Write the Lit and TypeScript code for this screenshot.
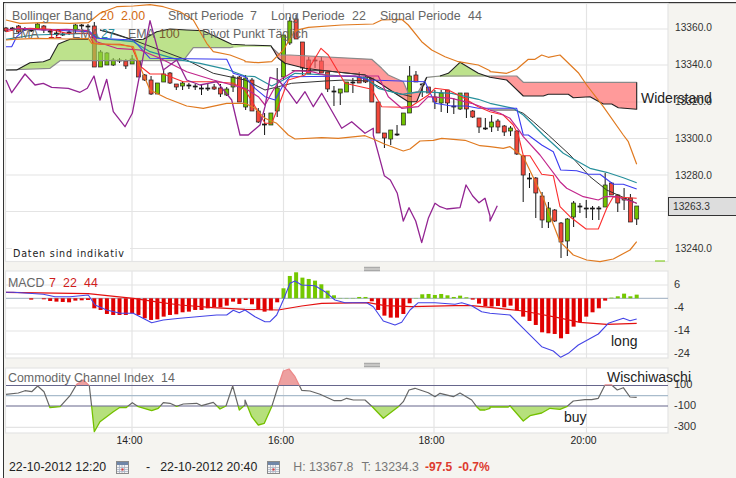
import { LitElement, html, svg, css } from "lit";
import { customElement } from "lit/decorators.js";

const X = (i: number) => 6 + 6.307 * i;

// zoomed-crop coordinates (3x) converted to chart coordinates
const Z = (ox: number, oy: number, s: string) =>
  s.trim().split(/\s+/).map((p) => {
    const [a, b] = p.split(",").map(Number);
    return `${(ox + a / 3).toFixed(1)},${(oy + b / 3).toFixed(1)}`;
  }).join(" ");

type C = [number, number, number, number, string];
const candles: C[] = [
  [28,31,27,32,"r"],[28,29,27,31,"d"],[26,32,25,33,"r"],[29,30,27,31,"d"],[30,31,28,32,"d"],[24,29,23,30,"g"],[26,30,25,33,"r"],[31,32,29,34,"d"],
  [33,34,31,36,"d"],[34,35,32,36,"d"],[32,33,30,35,"d"],[25,30,24,33,"g"],[25,26,24,29,"d"],[26,27,24,30,"d"],
  [26,67,22,67,"r"],[52,67,50,67,"g"],[53,65,52,65,"g"],[60,65,58,66,"g"],[60,61,58,63,"d"],[61,66,59,69,"r"],[59,64,55,64,"g"],[61,77,61,77,"r"],
  [75,80,74,81,"r"],[80,94,76,95,"r"],[83,94,83,94,"g"],[74,82,70,82,"g"],[73,83,72,84,"r"],[84,87,84,90,"r"],[83,86,81,90,"g"],[85,86,83,89,"d"],
  [86,87,84,90,"d"],[88,89,85,95,"d"],[88,89,83,91,"d"],[87,89,84,90,"r"],[88,94,84,97,"r"],[89,95,87,96,"g"],[77,87,75,92,"g"],[77,102,76,102,"r"],
  [78,107,75,110,"g"],[80,111,78,111,"r"],[111,122,108,123,"r"],[124,125,113,135,"d"],[113,125,113,125,"g"],[88,111,68,117,"g"],[35,77,35,80,"g"],[21,43,17,45,"g"],
  [19,39,15,39,"r"],[42,68,42,75,"r"],[60,74,57,74,"r"],[60,61,57,68,"d"],[61,73,57,73,"r"],[72,89,72,92,"r"],[91,92,86,106,"d"],[89,93,89,105,"g"],
  [82,92,82,92,"g"],[82,83,78,93,"d"],[77,83,72,83,"r"],[77,82,75,83,"r"],[78,102,78,102,"r"],[102,133,102,133,"r"],[133,138,133,148,"r"],[130,139,130,145,"g"],
  [134,135,125,136,"d"],[113,125,113,125,"g"],[76,113,66,113,"g"],[75,82,71,82,"r"],[84,85,83,97,"d"],[87,93,87,93,"r"],[97,102,90,109,"r"],[93,103,90,112,"g"],
  [90,103,90,113,"r"],[106,107,98,114,"d"],[93,109,93,110,"g"],[93,109,93,118,"r"],[111,117,110,118,"r"],[118,127,118,133,"r"],[128,129,118,130,"d"],[122,127,115,132,"g"],
  [121,127,119,131,"r"],[126,132,125,136,"r"],[128,131,126,136,"g"],[131,154,130,155,"r"],[156,175,155,202,"r"],[178,179,173,188,"d"],[178,193,177,218,"r"],[196,220,192,228,"r"],
  [208,222,202,228,"g"],[210,221,209,222,"r"],[223,242,222,258,"r"],[219,241,218,256,"g"],[203,217,201,227,"g"],[206,207,203,213,"d"],[208,209,200,218,"d"],[208,209,206,220,"d"],
  [208,209,206,220,"d"],[185,207,173,207,"g"],[183,195,182,195,"r"],[195,203,194,212,"r"],[198,200,188,210,"g"],[198,222,194,222,"r"],[206,219,206,225,"g"],
];

// histogram per candle index, in 3x crop pixels from the zero line (+ up, - down)
const hist: number[] = [
  0,0,0,0,-4,0,-3,-8,-10,-11,-12,-7,-6,-5,-30,-35,-47,-50,-50,-50,-45,-50,-60,-65,-63,-55,-50,-48,-42,-40,-35,-35,-30,-27,-27,-22,-10,-17,
  -5,-18,-33,-40,-36,-12,30,67,78,62,58,53,42,23,9,1,1,1,4,4,-9,-35,-52,-58,-58,-47,-15,1,12,13,10,13,9,4,8,3,-4,-16,-24,
  -25,-23,-27,-22,-36,-55,-68,-80,-102,-105,-107,-120,-107,-85,-72,-55,-42,-30,-7,2,6,14,6,11,
];

const bbUp = Z(0,0,"18,60 60,70 130,68 210,70 265,68 300,40 350,20 400,18 450,14 490,20 540,35 580,60 620,130 640,155 690,165 735,182") + " " +
  Z(245,0,"0,185 40,188 80,185 115,150 150,92 190,82 290,75 385,72 410,60 470,58 490,75 530,125 560,150 600,170 640,185 700,195 735,212") + " " +
  Z(490,0,"0,215 50,220 80,208 115,178 135,178 155,165 175,172 210,165 265,218 290,255 340,320 400,405") + " " + Z(490,135,"415,20 440,88");
const bbLow = Z(0,0,"18,120 40,118 110,115 200,117 265,115 275,130 360,135 400,140 420,200 450,270 500,295 560,318 610,325 680,310 735,310") + " " +
  Z(245,0,"30,325 60,355 95,370 130,405") + " " +
  Z(245,135,"150,12 230,8 280,10 360,2 385,12 420,28 475,48 495,42 525,18 565,16 590,10 660,16 705,32 735,35") + " " +
  Z(490,135,"40,40 60,35 100,65 160,190 210,320 250,360 290,375 330,380 370,372 420,345 440,320");
const purple = Z(0,0,"18,240 35,278 75,222 105,255 130,250 155,262 205,265 240,277 262,265 282,228 300,300 320,238 340,335 375,380 397,340 450,62 490,210 530,180 560,240 600,255 650,245 695,300 720,405") + " " +
  Z(245,0,"10,405 45,375 60,320 75,232 100,240 130,275 155,310 180,275 205,320 230,280 290,385 320,365 360,400 385,385") + " " +
  Z(245,135,"385,0 400,55 418,122 436,135 457,175 475,258 492,218 512,258 530,323 550,250 570,205 585,215 605,222 645,218 663,150 683,183 702,203 720,190 735,243") + " " + Z(490,135,"0,258 22,212");
const magenta = Z(0,0,"18,90 60,85 130,90 200,88 265,92 290,125 350,145 420,150 480,175 560,215 640,240 735,265") + " " +
  Z(245,0,"40,290 60,315 85,270 105,240 150,212 200,215 250,228 400,228 430,290 470,325 520,320 550,290 620,295 680,310 735,330") + " " +
  Z(490,0,"30,340 60,355 90,395") + " " + Z(490,135,"100,5 150,60 210,140 230,160 280,185 325,195 345,185 380,185 440,205");
const red = Z(0,0,"18,95 50,88 90,85 150,88 200,100 265,100 280,130 300,133 360,133 395,140 420,198 450,222 490,222 550,245 640,245 700,250 735,270") + " " +
  Z(245,0,"40,335 60,370 80,370 100,320 130,240 180,225 228,145 250,165 300,250 380,268 410,320 470,322 500,318 550,285 570,265 610,270 650,290 700,320 735,335") + " " +
  Z(490,0,"40,345 70,375 85,405") + " " + Z(490,135,"100,62 120,62 155,118 190,122 210,215 240,245 288,282 325,282 350,220 370,185 440,190");
const blue = Z(0,0,"18,140 35,140 50,110 75,88 150,90 270,95 290,115 400,120 450,175 680,178 700,220 735,230") + " " +
  Z(245,0,"30,265 60,290 90,300 115,255 135,230 330,228 370,240 540,245 570,310 620,318 665,318 700,325") + " " +
  Z(490,0,"80,325 100,405") + " " + Z(490,135,"115,0 155,30 190,50 212,105 260,107 295,118 330,118 370,148 400,148 440,162");
const teal = Z(0,0,"18,118 100,105 265,100 300,115 400,125 450,155 530,178 600,190 680,208 735,228") + " " +
  Z(245,0,"30,230 80,258 115,240 150,220 250,225 360,232 400,265 470,283 530,275 620,280 700,298 735,310") + " " +
  Z(490,0,"70,325 100,345 160,405") + " " + Z(490,135,"220,55 300,100 350,112 400,128 440,143");
const dark = Z(0,0,"300,90 400,120 480,150 560,180 640,220 735,240") + " " +
  Z(245,0,"60,270 100,260 140,250 240,243 300,240 370,243 420,270 500,290") + " " ;
const dark2 = Z(490,0,"0,330 75,330 100,340 130,365 175,405") + " " + Z(490,135,"240,60 300,125 350,165 440,205");
const darkBox = Z(245,0,"140,212 240,212 360,225 380,240");

const cloudGreen = [
  Z(0,0,"175,132 210,118 280,115 400,120 430,118 470,95 510,87 560,90 610,92 695,133") + " " + Z(245,0,"0,135 78,137 78,140 0,140") + " " + Z(0,0,"700,143 580,143 550,182 180,182 150,205 60,208 18,210 50,210 90,188 130,185 150,178"),
  Z(245,0,"545,232 585,228 610,220 645,187 700,220 735,232") + " " + Z(490,0,"0,228 0,228"),
];
const cloudRed = [
  Z(245,0,"78,140 105,165 135,165 380,178 430,225 475,245 490,280 520,275 545,232 515,305 490,305 450,280 390,240 360,225 240,212 180,205 120,190 100,175"),
  Z(490,0,"0,228 80,228 100,247 440,247 440,328 385,323 365,312 340,312 300,290 250,293 235,283 175,283 160,288 100,288 50,240 0,232"),
];
const cloudTop = Z(0,0,"18,210 50,210 90,188 130,185 150,178 175,132 210,118 265,118");
const cloudTop2 = Z(0,0,"300,90 340,100 400,120 430,118 470,95 510,87 560,90 610,92 695,133") + " " + Z(245,0,"0,135 78,137 100,175 120,190 180,205 240,212 360,225 390,240 450,280 490,305 515,305 545,232");
const cloudTop3 = Z(245,0,"585,228 610,220 645,187 700,220 735,232") + " " + Z(490,0,"0,232 50,240 100,288 160,288 175,283 235,283 250,293 300,290 340,312 365,312 385,323 440,328 440,247");
const cloudGrey = Z(0,0,"18,210 150,205 180,182 550,182 580,143 690,143 700,140") + " ";
const cloudGrey2 = Z(245,0,"78,140 105,165 135,165 380,178 410,205 430,225 475,245 490,280 520,275 545,232 585,228 735,228") + " " + Z(490,0,"80,228 100,247 440,247");

const macdSig = Z(0,265,"18,82 265,86 400,100 480,112 540,120 640,128 735,133") + " " + Z(245,265,"100,135 170,123 230,115 370,113 420,122 500,125 630,122 680,122 735,127") + " " + Z(490,265,"100,138 200,157 270,172 350,178 440,175");
const macdLine = Z(0,265,"18,82 40,82 130,88 165,95 210,95 265,90 285,120 320,135 360,145 400,145 455,173 490,165 540,160 650,150 680,150 700,136 718,143 735,135") + " " +
  Z(245,265,"30,155 60,170 75,170 95,150 115,105 135,55 150,48 170,60 210,62 240,80 270,105 300,113 365,113 385,125 415,168 450,180 470,172 495,135 520,113 570,113 630,118 650,113 680,122 710,140 735,145") + " " +
  Z(490,265,"60,150 100,190 155,245 190,258 212,277 235,265 265,240 325,207 355,175 400,160 420,167 440,162");

const cciPts = Z(0,365,"18,88 55,84 75,77 95,80 113,63 132,80 150,128 180,125 210,92 230,58 250,45 268,62 275,125 283,200 300,170 340,140 358,128 378,128 397,113 415,125 455,137 475,130 490,113 510,115 530,124 550,117 590,115 605,122 640,112 660,132 678,123 698,63 718,135 735,120") + " " +
  Z(245,365,"0,105 20,155 40,180 58,175 80,125 100,62 115,18 132,12 150,35 170,76 195,78 225,88 268,107 288,107 305,100 325,105 360,105 382,125 415,160 460,125 475,110 492,75 510,70 550,83 570,95 585,85 625,95 645,84 680,105 695,125 705,135 720,135 735,130") + " " +
  Z(490,365,"0,126 55,126 60,122 100,168 120,152 155,144 180,130 210,133 230,125 250,108 285,104 305,104 325,100 345,60 365,60 382,75 400,68 420,96 440,97");
const cciArea = `6,395.7 ${cciPts} 636.7,395.7`;

const Cal = () => html`<svg class="cal" viewBox="0 0 13 13" width="13" height="13">
  <rect x="0.5" y="0.5" width="12" height="12" fill="#f4f4f4" stroke="#8a8a8a" />
  <rect x="1" y="1" width="11" height="3" fill="#6f86a8" />
  <path d="M1 6.5H12M1 8.5H12M1 10.5H12M3.5 4V12M6 4V12M8.5 4V12" stroke="#a9b3c4" stroke-width=".8" fill="none" />
  <rect x="5.5" y="7.5" width="2" height="2" fill="#e03030" />
</svg>`;

@customElement("app-root")
export class AppRoot extends LitElement {
  static styles = css`
    :host { display: block; width: 736px; height: 478px; background: #fff; overflow: hidden; font-family: "Liberation Sans", Arial, sans-serif; }
    .chart { display: block; width: 736px; height: 446px; }
    .bg { fill: #f5f4f0; }
    .bar { fill: #333; }
    .panel { fill: #fff; stroke: #e4e4e4; stroke-width: 1.2; }
    .grid { stroke: #e4e4e4; stroke-width: 1.2; fill: none; }
    .wick { stroke: #111; stroke-width: 1; }
    .cr { fill: #f2473a; stroke: #222; stroke-width: .7; }
    .cg { fill: #72c200; stroke: #222; stroke-width: .7; }
    .cd { fill: #333; stroke: #111; stroke-width: .7; }
    .green { fill: #9ad34e; fill-opacity: .65; stroke: none; }
    .pink { fill: #ff6464; fill-opacity: .65; stroke: none; }
    polyline { fill: none; stroke-linejoin: round; }
    .l-orange { stroke: #e07a20; stroke-width: 1.2; }
    .l-purple { stroke: #932492; stroke-width: 1.3; }
    .l-mag { stroke: #c2268c; stroke-width: 1.2; }
    .l-red { stroke: #fb2e2e; stroke-width: 1.1; }
    .l-blue { stroke: #3b3bf0; stroke-width: 1.1; }
    .l-teal { stroke: #27909c; stroke-width: 1.2; }
    .l-dark { stroke: #333; stroke-width: 1; }
    .l-cloud { stroke: #222; stroke-width: 1.1; }
    .l-cgrey { stroke: #8a8a8a; stroke-width: 1.2; }
    .zero { stroke: #aebccb; stroke-width: 1.2; }
    .hneg { fill: #e00000; }
    .hpos { fill: #74c800; }
    .sig { stroke: #e31010; stroke-width: 1.2; }
    .macd { stroke: #4444e6; stroke-width: 1.1; }
    .lvl { stroke: #66668c; stroke-width: 1.2; }
    .lvl2 { stroke: #a9bccc; stroke-width: 1.2; }
    .cci { stroke: #666; stroke-width: 1.2; }
    .cci-g { stroke: #74c000; stroke-width: 1.3; }
    .cci-r { stroke: #ec8a8a; stroke-width: 1.3; }
    .fg { fill: #b6e07c; }
    .fr { fill: #eda0a0; }
    .sash { stroke: #999; stroke-width: 1; }
    text { font-family: "Liberation Sans", Arial, sans-serif; }
    .lbl { font-size: 12.4px; fill: #666; }
    .or { fill: #d26a10; }
    .rd { fill: #cf1c1c; }
    .tl { fill: #2a8d9c; }
    .br { fill: #7a5a30; }
    .ax { font-size: 10.2px; fill: #333; }
    .ax2 { font-size: 11px; fill: #333; }
    .note { font-size: 14px; fill: #222; }
    .time { font-size: 10.4px; fill: #222; text-anchor: middle; }
    .ind { font-family: "DejaVu Sans", sans-serif; font-size: 9.6px; fill: #222; }
    .val { fill: #ddd; stroke: #333; stroke-width: 1; }
    .foot { display: flex; align-items: center; height: 32px; margin-left: 3px; padding-left: 5px; padding-top: 10px; box-sizing: border-box; background: #f5f4f0; border-left: 1px solid #333; font-size: 12.3px; color: #222; }
    .cal { margin-left: 10px; flex: none; }
    .dash { margin-left: 17px; margin-right: 10px; }
    .hl { color: #777; margin-left: 13px; }
    .hl2 { color: #777; margin-left: 8px; }
    .ch { color: #dd3a2e; font-weight: 700; font-size: 12px; margin-left: 6px; }
  `;

  render() {
    const lineX = [132, 283.5, 434, 586.5];
    return html`
      <svg class="chart" viewBox="0 0 736 446" width="736" height="446">
        <defs>
          <clipPath id="below"><rect x="0" y="406" width="736" height="40" /></clipPath>
          <clipPath id="above"><rect x="0" y="360" width="736" height="25.5" /></clipPath>
          <clipPath id="mid"><rect x="0" y="385.5" width="736" height="20.5" /></clipPath>
        </defs>
        <rect class="bg" x="3" y="2" width="733" height="444" />
        <rect class="bar" x="3" y="2" width="733" height="1.2" />
        <rect class="bar" x="3" y="2" width="1" height="444" />
        <rect class="panel" x="5.5" y="3.5" width="662.5" height="258" />
        <rect class="panel" x="5.5" y="271" width="662.5" height="87" />
        <rect class="panel" x="5.5" y="368" width="662.5" height="65" />

        ${[29, 65, 102, 138.5, 175, 211.5, 248.5].map((y) => svg`<line class="grid" x1="6" x2="668" y1=${y} y2=${y} />`)}
        ${[285, 308, 331, 354].map((y) => svg`<line class="grid" x1="6" x2="668" y1=${y} y2=${y} />`)}
        <line class="grid" x1="6" x2="668" y1="427.3" y2="427.3" />
        ${lineX.map((x) => svg`
          <line class="grid" x1=${x} x2=${x} y1="4" y2="261" />
          <line class="grid" x1=${x} x2=${x} y1="271" y2="358" />
          <line class="grid" x1=${x} x2=${x} y1="368" y2="433" />`)}

        ${candles.map((c, i) => {
          const x = X(i);
          return svg`
            <line class="wick" x1=${x} x2=${x} y1=${c[2]} y2=${c[3]} />
            <rect class=${"c" + c[4]} x=${x - 2} y=${c[0]} width="4" height=${Math.max(c[1] - c[0], 1)} />`;
        })}

        ${cloudGreen.map((p) => svg`<polygon class="green" points=${p} />`)}
        ${cloudRed.map((p) => svg`<polygon class="pink" points=${p} />`)}
        <polyline class="l-cgrey" points=${cloudGrey} />
        <polyline class="l-cgrey" points=${cloudGrey2} />
        <polyline class="l-cloud" points=${cloudTop} />
        <polyline class="l-cloud" points=${cloudTop2} />
        <polyline class="l-cloud" points=${cloudTop3} />

        <polyline class="l-dark" points=${dark} />
        <polyline class="l-dark" points=${dark2} />
        <polyline class="l-dark" points=${darkBox} />
        <polyline class="l-teal" points=${teal} />
        <polyline class="l-blue" points=${blue} />
        <polyline class="l-red" points=${red} />
        <polyline class="l-mag" points=${magenta} />
        <polyline class="l-purple" points=${purple} />
        <polyline class="l-orange" points=${bbUp} />
        <polyline class="l-orange" points=${bbLow} />
        <rect class="hpos" x="655" y="260.5" width="10" height="1" />

        <rect x="12" y="247" width="118" height="12" fill="#fff" />
        <text class="ind" x="13" y="257" textLength="111">Daten sind indikativ</text>

        <text class="lbl" x="12" y="20">Bollinger Band</text>
        <text class="lbl or" x="100" y="20">20</text>
        <text class="lbl or" x="121" y="20">2.00</text>
        <text class="lbl" x="168" y="20">Short Periode</text>
        <text class="lbl" x="250" y="20">7</text>
        <text class="lbl" x="271" y="20">Long Periode</text>
        <text class="lbl" x="352" y="20">22</text>
        <text class="lbl" x="380" y="20">Signal Periode</text>
        <text class="lbl" x="468" y="20">44</text>
        <text class="lbl" x="12" y="38">EMA</text>
        <text class="lbl rd" x="48" y="38">12</text>
        <text class="lbl" x="72" y="38">EMA</text>
        <text class="lbl tl" x="101" y="38">27</text>
        <text class="lbl" x="128" y="38">EMA</text>
        <text class="lbl br" x="159" y="38">100</text>
        <text class="lbl" x="202" y="38">Pivot Punkt Täglich</text>

        ${[["13360.0", 31], ["13340.0", 68], ["13320.0", 105], ["13300.0", 142], ["13280.0", 178.5], ["13240.0", 252]].map(
          ([t, y]) => svg`<text class="ax" x="675" y=${y}>${t}</text>`)}
        <rect class="val" x="668.5" y="197.5" width="68" height="18" />
        <text class="ax" x="673" y="210">13263.3</text>
        <text class="note" x="641" y="103">Widerstand</text>

        <line class="sash" x1="364" x2="380" y1="267.3" y2="267.3" />
        <line class="sash" x1="364" x2="380" y1="269" y2="269" />
        <line class="sash" x1="364" x2="380" y1="270.7" y2="270.7" />
        <line class="sash" x1="364" x2="380" y1="363.3" y2="363.3" />
        <line class="sash" x1="364" x2="380" y1="365" y2="365" />
        <line class="sash" x1="364" x2="380" y1="366.7" y2="366.7" />

        <line class="zero" x1="6" x2="668" y1="298.3" y2="298.3" />
        ${hist.map((v, i) => {
          if (!v) return null;
          const h = Math.abs(v) / 3;
          return svg`<rect class=${v > 0 ? "hpos" : "hneg"} x=${X(i) - 2} y=${v > 0 ? 298.3 - h : 298.3} width="4" height=${h} />`;
        })}
        <polyline class="sig" points=${macdSig} />
        <polyline class="macd" points=${macdLine} />
        <text class="lbl" x="8" y="287">MACD</text>
        <text class="lbl rd" x="49" y="287">7</text>
        <text class="lbl rd" x="63" y="287">22</text>
        <text class="lbl rd" x="84" y="287">44</text>
        ${[["6", 288], ["-4", 311], ["-14", 334], ["-24", 357]].map(
          ([t, y]) => svg`<text class="ax2" x="674" y=${y}>${t}</text>`)}
        <text class="note" x="611" y="346">long</text>

        <polygon class="fg" points=${cciArea} clip-path="url(#below)" />
        <polygon class="fr" points=${cciArea} clip-path="url(#above)" />
        <line class="lvl" x1="6" x2="668" y1="385.5" y2="385.5" />
        <line class="lvl2" x1="6" x2="668" y1="395.7" y2="395.7" />
        <line class="lvl" x1="6" x2="668" y1="406" y2="406" />
        <polyline class="cci" points=${cciPts} clip-path="url(#mid)" />
        <polyline class="cci-g" points=${cciPts} clip-path="url(#below)" />
        <polyline class="cci-r" points=${cciPts} clip-path="url(#above)" />
        <text class="lbl" x="8" y="382">Commodity Channel Index</text>
        <text class="lbl" x="161" y="382">14</text>
        ${[["100", 388], ["-100", 409], ["-300", 430]].map(
          ([t, y]) => svg`<text class="ax2" x="674" y=${y}>${t}</text>`)}
        <text class="note" x="564" y="422">buy</text>
        <text class="note" x="607" y="382">Wischiwaschi</text>
        ${[["14:00", 129.5], ["16:00", 281], ["18:00", 431.5], ["20:00", 583.5]].map(
          ([t, x]) => svg`<text class="time" x=${x} y="444">${t}</text>`)}
      </svg>
      <div class="foot">
        <span>22-10-2012 12:20</span>${Cal()}
        <span class="dash">-</span>
        <span>22-10-2012 20:40</span>${Cal()}
        <span class="hl">H: 13367.8</span>
        <span class="hl2">T: 13234.3</span>
        <span class="ch">-97.5</span>
        <span class="ch">-0.7%</span>
      </div>
    `;
  }
}
